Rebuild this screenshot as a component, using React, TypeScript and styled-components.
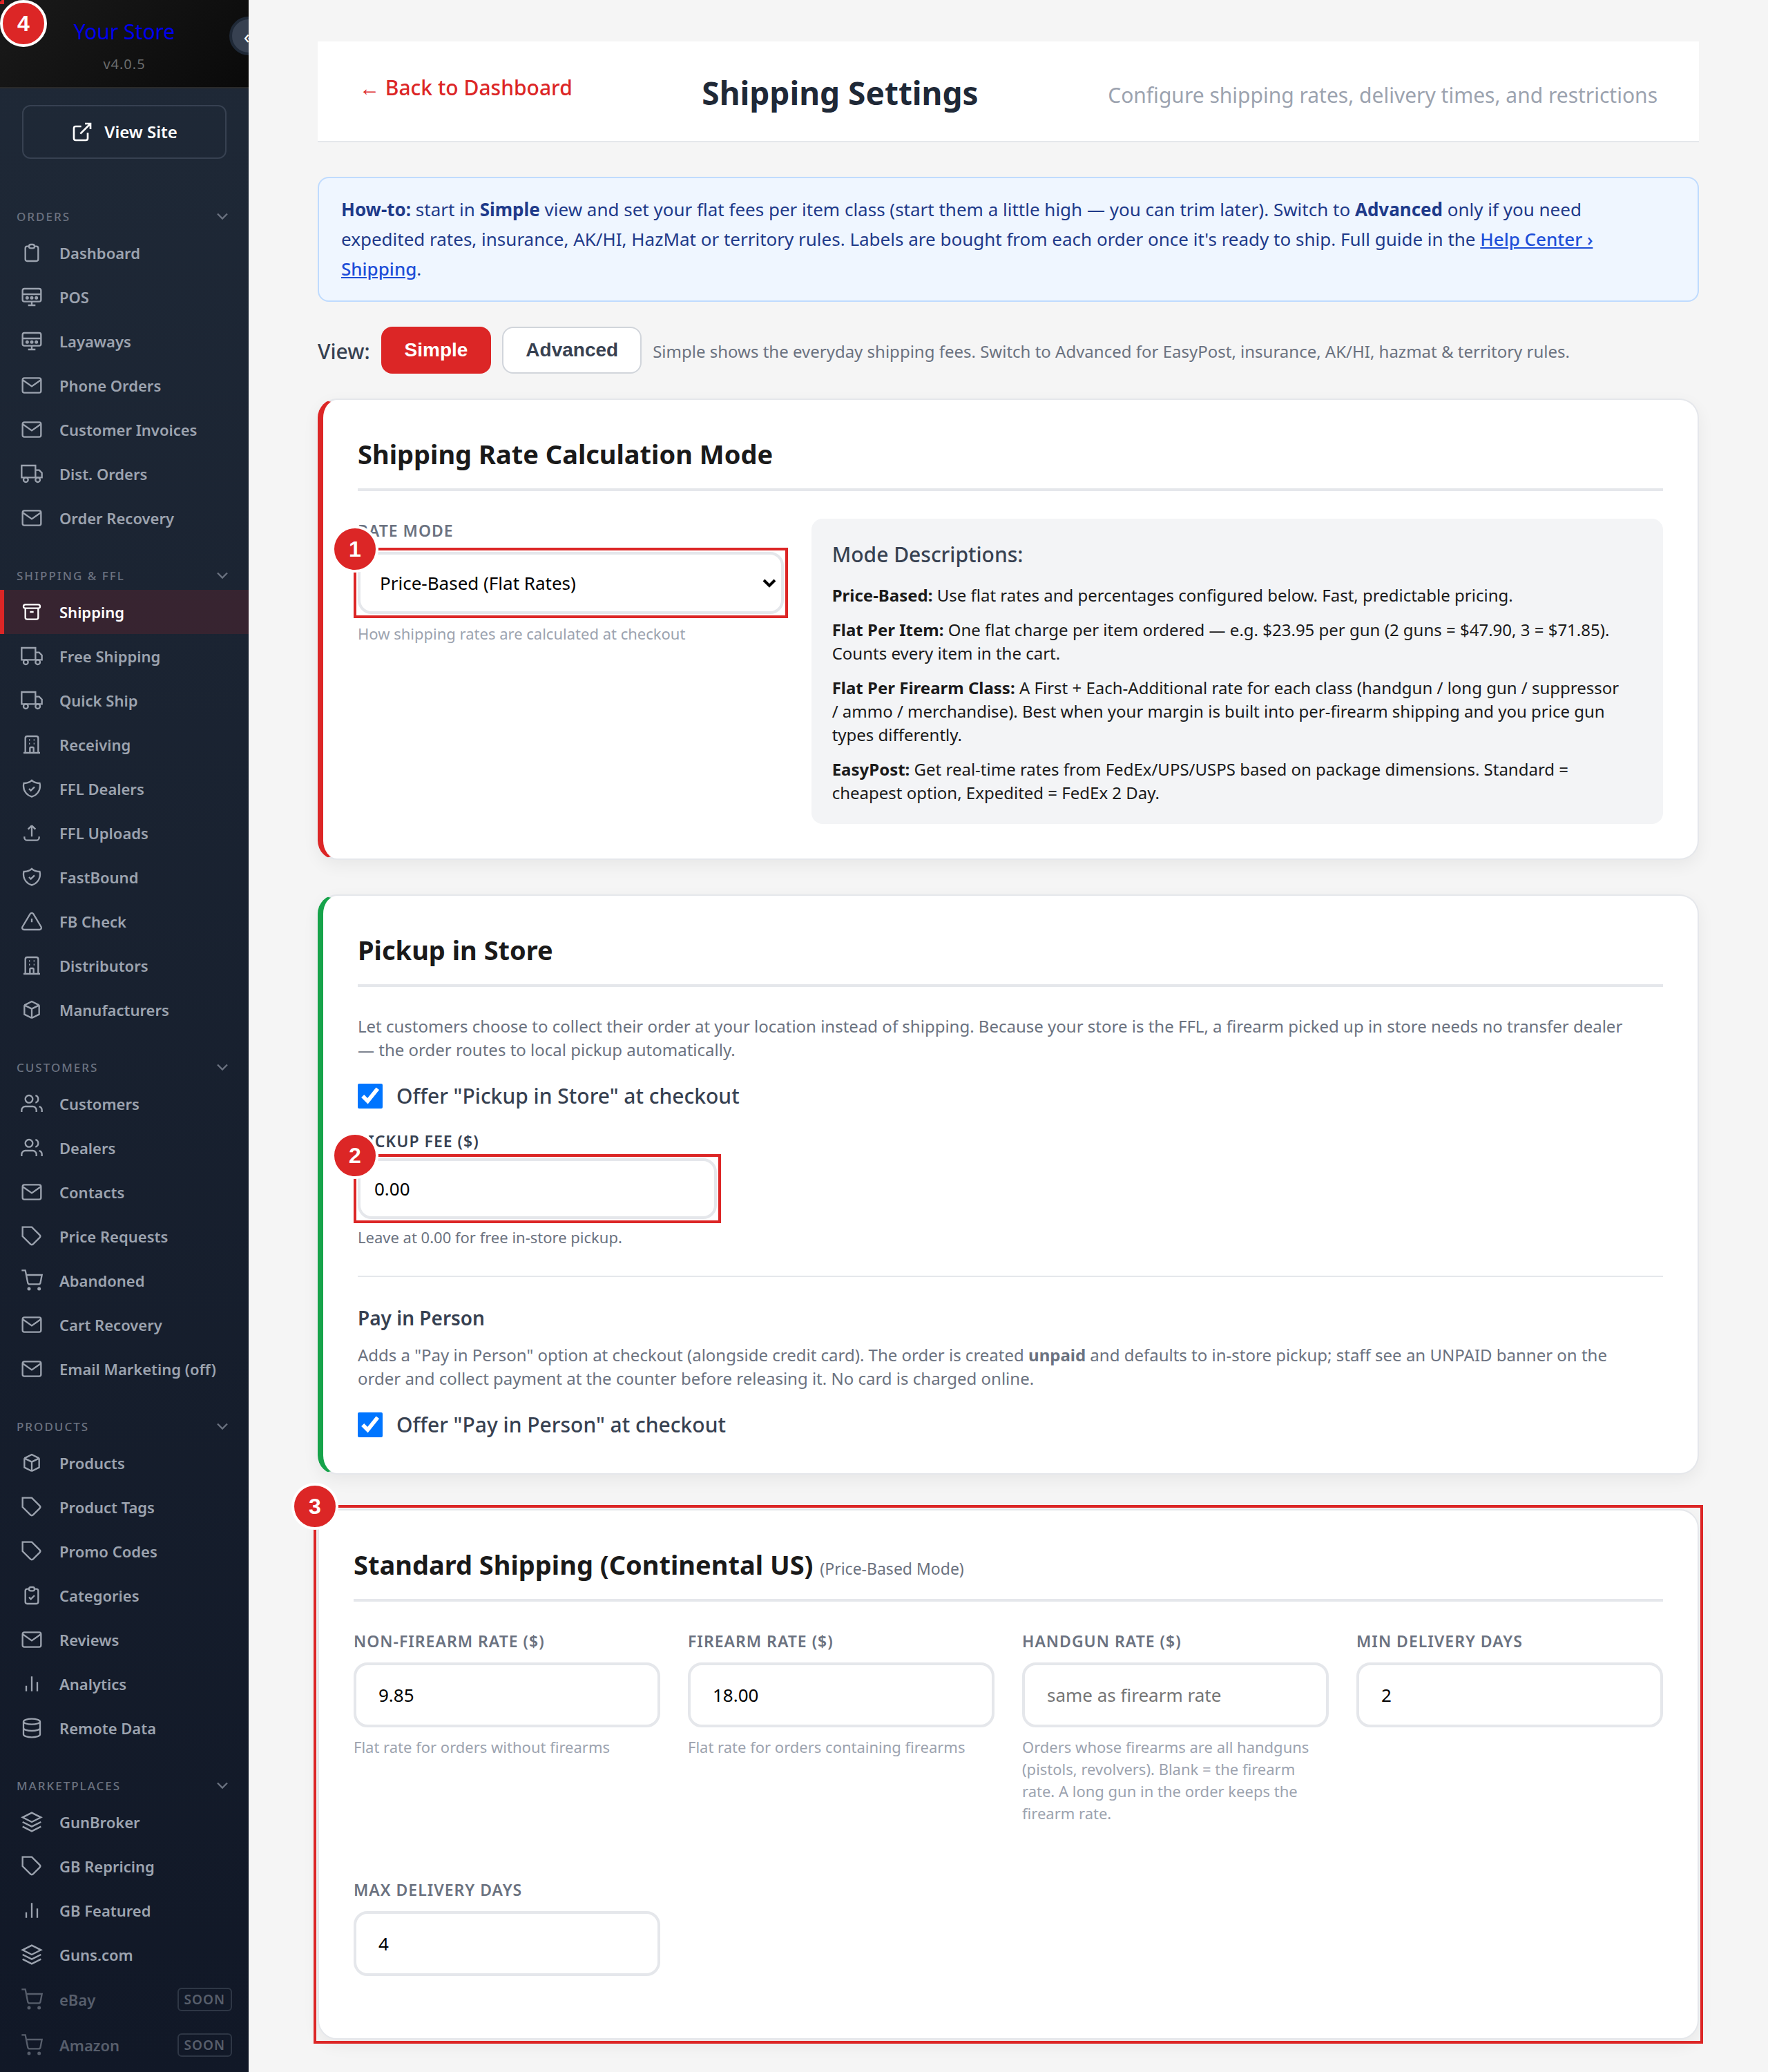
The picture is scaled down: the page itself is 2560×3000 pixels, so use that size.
import React from 'react';
import styled, { createGlobalStyle, css } from 'styled-components';

const GlobalStyle = createGlobalStyle`
  *, *::before, *::after { box-sizing: border-box; }
  body {
    margin: 0;
    background: #f5f5f5;
    color: #1a1a1a;
    font-family: "Noto Sans", "Open Sans", sans-serif;
    font-size: 24px;
    line-height: 34px;
  }
  h1, h2, h3, p, ul { margin: 0; padding: 0; }
  ul { list-style: none; }
  button, input, select { font-family: inherit; }
`;

/* ---------- Icons ---------- */

const Svg = styled.svg<{ $size: number }>`
  display: block;
  flex: none;
  width: ${(p) => p.$size}px;
  height: ${(p) => p.$size}px;
  fill: none;
  stroke: currentColor;
`;

const shapes = {
  clipboard: (
    <path d="M9 5H7a2 2 0 00-2 2v12a2 2 0 002 2h10a2 2 0 002-2V7a2 2 0 00-2-2h-2M9 5a2 2 0 002 2h2a2 2 0 002-2M9 5a2 2 0 012-2h2a2 2 0 012 2" />
  ),
  clipboardCheck: (
    <path d="M9 5H7a2 2 0 00-2 2v12a2 2 0 002 2h10a2 2 0 002-2V7a2 2 0 00-2-2h-2M9 5a2 2 0 002 2h2a2 2 0 002-2M9 5a2 2 0 012-2h2a2 2 0 012 2m-6 9l2 2 4-4" />
  ),
  register: (
    <>
      <rect x="2" y="3" width="20" height="14" rx="2" />
      <path d="M2 9h20M12 17v4M8 21h8" />
      <circle cx="7" cy="13" r="1" />
      <circle cx="12" cy="13" r="1" />
      <circle cx="17" cy="13" r="1" />
    </>
  ),
  mail: (
    <>
      <rect x="2" y="4" width="20" height="16" rx="2" />
      <path d="M22 6l-10 7L2 6" />
    </>
  ),
  truck: (
    <>
      <path d="M1 3h15v13H1zM16 8h4l3 3v5h-7z" />
      <circle cx="5.5" cy="18.5" r="2.5" />
      <circle cx="18.5" cy="18.5" r="2.5" />
    </>
  ),
  archive: (
    <path d="M5 8h14M5 8a2 2 0 110-4h14a2 2 0 110 4M5 8v10a2 2 0 002 2h10a2 2 0 002-2V8m-9 4h4" />
  ),
  building: (
    <path d="M19 21V5a2 2 0 00-2-2H7a2 2 0 00-2 2v16m14 0h2m-2 0h-5m-9 0H3m2 0h5M9 7h1m-1 4h1m4-4h1m-1 4h1m-5 10v-5a1 1 0 011-1h2a1 1 0 011 1v5m-4 0h4" />
  ),
  shield: (
    <path d="M9 12l2 2 4-4m5.618-4.016A11.955 11.955 0 0112 2.944a11.955 11.955 0 01-8.618 3.04A12.02 12.02 0 003 9c0 5.591 3.824 10.29 9 11.622 5.176-1.332 9-6.03 9-11.622 0-1.042-.133-2.052-.382-3.016z" />
  ),
  upload: <path d="M4 16v1a3 3 0 003 3h10a3 3 0 003-3v-1m-4-8l-4-4m0 0L8 8m4-4v12" />,
  alert: (
    <path d="M10.29 3.86L1.82 18a2 2 0 001.71 3h16.94a2 2 0 001.71-3L13.71 3.86a2 2 0 00-3.42 0zM12 9v4" />
  ),
  cube: (
    <path d="M20 7l-8-4-8 4m16 0l-8 4m8-4v10l-8 4m0-10L4 7m8 4v10M4 7v10l8 4" />
  ),
  users: (
    <>
      <path d="M17 21v-2a4 4 0 00-4-4H5a4 4 0 00-4 4v2M23 21v-2a4 4 0 00-3-3.87M16 3.13a4 4 0 010 7.75" />
      <circle cx="9" cy="7" r="4" />
    </>
  ),
  tag: (
    <path d="M20.59 13.41l-7.17 7.17a2 2 0 01-2.83 0L2 12V2h10l8.59 8.59a2 2 0 010 2.82z" />
  ),
  cart: (
    <>
      <circle cx="9" cy="21" r="1" />
      <circle cx="20" cy="21" r="1" />
      <path d="M1 1h4l2.68 13.39a2 2 0 002 1.61h9.72a2 2 0 002-1.61L23 6H6" />
    </>
  ),
  bars: <path d="M18 20V10M12 20V4M6 20v-6" />,
  database: (
    <>
      <ellipse cx="12" cy="5" rx="9" ry="3" />
      <path d="M21 12c0 1.66-4 3-9 3s-9-1.34-9-3M3 5v14c0 1.66 4 3 9 3s9-1.34 9-3V5" />
    </>
  ),
  layers: <path d="M12 2L2 7l10 5 10-5-10-5zM2 17l10 5 10-5M2 12l10 5 10-5" />,
  external: (
    <path d="M18 13v6a2 2 0 01-2 2H5a2 2 0 01-2-2V8a2 2 0 012-2h6M15 3h6v6M10 14L21 3" />
  ),
  chevron: <path d="M6 9l6 6 6-6" />,
};

type IconName = keyof typeof shapes;

function Icon({ name, size = 32, weight = 1.75 }: { name: IconName; size?: number; weight?: number }) {
  return (
    <Svg $size={size} viewBox="0 0 24 24" strokeWidth={weight} aria-hidden="true">
      {shapes[name]}
    </Svg>
  );
}

/* ---------- Callouts ---------- */

const Outline = styled.span`
  position: absolute;
  inset: -6px;
  border: 4px solid #dc2626;
  pointer-events: none;
`;

const Badge = styled.span<{ $corner?: boolean }>`
  position: absolute;
  z-index: 2;
  top: ${(p) => (p.$corner ? 0 : -38)}px;
  left: ${(p) => (p.$corner ? 0 : -38)}px;
  display: flex;
  align-items: center;
  justify-content: center;
  width: 68px;
  height: 68px;
  border: 4px solid #fff;
  border-radius: 50%;
  background: #dc2626;
  color: #fff;
  font: 700 32px/60px "Liberation Sans", Arial, sans-serif;
`;

const CalloutTarget = styled.div`
  position: relative;
`;

const CornerTarget = styled.div`
  position: absolute;
  z-index: 3;
  top: 0;
  left: 0;
`;

function Callout({ n, corner }: { n: number; corner?: boolean }) {
  return (
    <>
      <Outline />
      <Badge $corner={corner}>{n}</Badge>
    </>
  );
}

/* ---------- Shell and sidebar ---------- */

const Shell = styled.div`
  display: grid;
  grid-template-columns: 360px minmax(0, 1fr);
  min-height: 100vh;
`;

const Sidebar = styled.aside`
  position: relative;
  overflow: hidden;
  background: linear-gradient(180deg, #1f2937 0%, #111827 100%);
  color: #9ca3af;
`;

const Brand = styled.header`
  display: flex;
  flex-direction: column;
  align-items: center;
  gap: 12px;
  padding: 24px 32px 20px;
  border-bottom: 2px solid #2a2a2a;
  background: linear-gradient(135deg, #1a1a1a 0%, #0a0a0a 100%);
`;

const StoreLink = styled.a`
  color: #0000ee;
  font-size: 30px;
  line-height: 44px;
  text-decoration: none;
`;

const Version = styled.span`
  color: #6b6b6b;
  font-size: 20px;
  line-height: 26px;
  letter-spacing: 1px;
`;

const CollapseButton = styled.button`
  position: absolute;
  top: 24px;
  right: -28px;
  width: 56px;
  height: 56px;
  padding: 0;
  border: 4px solid #1f2937;
  border-radius: 50%;
  background: #374151;
  color: #fff;
  font-size: 28px;
  line-height: 44px;
`;

const SiteLink = styled.a`
  display: flex;
  align-items: center;
  justify-content: center;
  gap: 16px;
  height: 78px;
  margin: 24px 32px 32px;
  border: 2px solid #374151;
  border-radius: 12px;
  color: #fff;
  font-size: 24px;
  font-weight: 600;
  text-decoration: none;
`;

const NavGroup = styled.section`
  padding-top: 32px;
`;

const GroupToggle = styled.button`
  display: flex;
  align-items: center;
  justify-content: space-between;
  width: 100%;
  height: 40px;
  padding: 0 24px 2px;
  border: 0;
  background: none;
  color: #6b7280;
  font-size: 17px;
  font-weight: 500;
  letter-spacing: 2px;
  text-transform: uppercase;
`;

const NavLink = styled.a<{ $active?: boolean; $soon?: boolean }>`
  display: flex;
  align-items: center;
  gap: 24px;
  height: ${(p) => (p.$soon ? 66 : 64)}px;
  padding: 0 24px;
  border-left: 6px solid transparent;
  color: #9ca3af;
  font-size: 22px;
  font-weight: 600;
  text-decoration: none;
  ${(p) => p.$soon && css`opacity: 0.5;`}
  ${(p) =>
    p.$active &&
    css`
      border-left-color: #dc2626;
      background: rgba(220, 38, 38, 0.15);
      color: #fff;
    `}
`;

const Soon = styled.span`
  margin-left: auto;
  padding: 0 8px;
  border: 2px solid #4b5563;
  border-radius: 6px;
  font-size: 19px;
  line-height: 30px;
  letter-spacing: 1px;
`;

type Item = { label: string; icon: IconName; active?: boolean; soon?: boolean };

const NAV: { title: string; items: Item[] }[] = [
  {
    title: 'Orders',
    items: [
      { label: 'Dashboard', icon: 'clipboard' },
      { label: 'POS', icon: 'register' },
      { label: 'Layaways', icon: 'register' },
      { label: 'Phone Orders', icon: 'mail' },
      { label: 'Customer Invoices', icon: 'mail' },
      { label: 'Dist. Orders', icon: 'truck' },
      { label: 'Order Recovery', icon: 'mail' },
    ],
  },
  {
    title: 'Shipping & FFL',
    items: [
      { label: 'Shipping', icon: 'archive', active: true },
      { label: 'Free Shipping', icon: 'truck' },
      { label: 'Quick Ship', icon: 'truck' },
      { label: 'Receiving', icon: 'building' },
      { label: 'FFL Dealers', icon: 'shield' },
      { label: 'FFL Uploads', icon: 'upload' },
      { label: 'FastBound', icon: 'shield' },
      { label: 'FB Check', icon: 'alert' },
      { label: 'Distributors', icon: 'building' },
      { label: 'Manufacturers', icon: 'cube' },
    ],
  },
  {
    title: 'Customers',
    items: [
      { label: 'Customers', icon: 'users' },
      { label: 'Dealers', icon: 'users' },
      { label: 'Contacts', icon: 'mail' },
      { label: 'Price Requests', icon: 'tag' },
      { label: 'Abandoned', icon: 'cart' },
      { label: 'Cart Recovery', icon: 'mail' },
      { label: 'Email Marketing (off)', icon: 'mail' },
    ],
  },
  {
    title: 'Products',
    items: [
      { label: 'Products', icon: 'cube' },
      { label: 'Product Tags', icon: 'tag' },
      { label: 'Promo Codes', icon: 'tag' },
      { label: 'Categories', icon: 'clipboardCheck' },
      { label: 'Reviews', icon: 'mail' },
      { label: 'Analytics', icon: 'bars' },
      { label: 'Remote Data', icon: 'database' },
    ],
  },
  {
    title: 'Marketplaces',
    items: [
      { label: 'GunBroker', icon: 'layers' },
      { label: 'GB Repricing', icon: 'tag' },
      { label: 'GB Featured', icon: 'bars' },
      { label: 'Guns.com', icon: 'layers' },
      { label: 'eBay', icon: 'cart', soon: true },
      { label: 'Amazon', icon: 'cart', soon: true },
    ],
  },
];

/* ---------- Main column ---------- */

const Main = styled.main`
  padding: 60px 100px 40px;
`;

const PageHeader = styled.header`
  display: flex;
  align-items: center;
  justify-content: space-between;
  padding: 42px 60px 38px;
  border-bottom: 2px solid #e5e7eb;
  background: #fff;
`;

const BackLink = styled.a`
  margin-bottom: 14px;
  color: #dc2626;
  font-size: 30px;
  font-weight: 500;
  text-decoration: none;
`;

const PageTitle = styled.h1`
  color: #1f2937;
  font-size: 46px;
  line-height: 64px;
  font-weight: 700;
`;

const PageSubtitle = styled.p`
  margin-top: 8px;
  color: #9ca3af;
  font-size: 30px;
`;

const HowTo = styled.p`
  margin-top: 50px;
  padding: 24px 110px 24px 32px;
  border: 2px solid #bfdbfe;
  border-radius: 16px;
  background: #eff6ff;
  color: #1e3a8a;
  font-size: 26px;
  line-height: 43px;

  a {
    color: #1d4ed8;
    font-weight: 500;
  }
`;

const ViewBar = styled.div`
  display: flex;
  align-items: center;
  gap: 16px;
  margin: 36px 0;
`;

const ViewLabel = styled.span`
  padding-top: 4px;
  color: #374151;
  font-size: 30px;
  font-weight: 500;
`;

const ViewButton = styled.button<{ $on?: boolean }>`
  height: 68px;
  padding: 0 32px;
  border: 2px solid ${(p) => (p.$on ? '#dc2626' : '#d1d5db')};
  border-radius: 16px;
  background: ${(p) => (p.$on ? '#dc2626' : '#fff')};
  color: ${(p) => (p.$on ? '#fff' : '#374151')};
  font: 700 28px "Liberation Sans", Arial, sans-serif;
`;

const ViewHint = styled.span`
  padding-top: 4px;
  color: #6b7280;
`;

const Cards = styled.div`
  display: grid;
  gap: 50px;
`;

const Card = styled.section<{ $accent?: string }>`
  padding: 50px;
  border: 2px solid #e5e7eb;
  border-radius: 28px;
  background: #fff;
  box-shadow: 0 8px 24px rgba(0, 0, 0, 0.06);
  ${(p) => p.$accent && css`border-left: 8px solid ${p.$accent};`}
`;

const CardTitle = styled.h2`
  margin-bottom: 40px;
  padding-bottom: 22px;
  border-bottom: 4px solid #e5e7eb;
  font-size: 38px;
  line-height: 56px;
  font-weight: 700;
`;

const TitleNote = styled.small`
  color: #6b7280;
  font-size: 23px;
  line-height: 1;
  font-weight: 400;
`;

const ModeGrid = styled.div`
  display: grid;
  grid-template-columns: 1fr 2fr;
  gap: 40px;
`;

const RateGrid = styled.div`
  display: grid;
  grid-template-columns: repeat(4, 1fr);
  gap: 38px 40px;
`;

const Field = styled.div<{ $spaced?: boolean }>`
  margin-bottom: ${(p) => (p.$spaced ? 40 : 0)}px;
`;

const FieldLabel = styled.label<{ $compact?: boolean }>`
  display: block;
  margin-bottom: ${(p) => (p.$compact ? 10 : 14)}px;
  color: ${(p) => (p.$compact ? '#374151' : '#6b7280')};
  font-size: 23px;
  line-height: ${(p) => (p.$compact ? 30 : 34)}px;
  font-weight: 600;
  letter-spacing: 1px;
  text-transform: uppercase;
`;

const control = css`
  display: block;
  width: 100%;
  border: 4px solid #e5e7eb;
  border-radius: 20px;
  background: #fff;
  color: #000;
  font-size: 26px;
`;

const TextInput = styled.input<{ $compact?: boolean }>`
  ${control}
  height: ${(p) => (p.$compact ? 88 : 94)}px;
  padding: 0 ${(p) => (p.$compact ? 20 : 32)}px;

  &::placeholder {
    color: #757575;
    opacity: 1;
  }
`;

const Select = styled.select`
  ${control}
  height: 90px;
  padding: 0 60px 0 28px;
  appearance: none;
`;

const SelectArrow = styled.svg`
  position: absolute;
  top: 38px;
  right: 10px;
  width: 22px;
  height: 16px;
  fill: none;
  stroke: #000;
  stroke-width: 4;
  pointer-events: none;
`;

const Hint = styled.p<{ $dark?: boolean }>`
  margin-top: ${(p) => (p.$dark ? 10 : 12)}px;
  color: ${(p) => (p.$dark ? '#6b7280' : '#9ca3af')};
  font-size: 22px;
  line-height: 32px;
`;

const ModeNotes = styled.div`
  padding: 30px 54px 28px 30px;
  border-radius: 16px;
  background: #f3f4f6;

  p + p {
    margin-top: 16px;
  }
`;

const ModeHeading = styled.h3`
  margin-bottom: 20px;
  color: #374151;
  font-size: 30px;
  line-height: 44px;
  font-weight: 500;
`;

const Copy = styled.p`
  padding-right: 40px;
  color: #6b7280;
`;

const CheckRow = styled.label`
  display: flex;
  align-items: center;
  gap: 20px;
  height: 40px;
  margin: 30px 0;
  color: #374151;
  font-size: 30px;
  font-weight: 500;

  &:last-child {
    margin-bottom: 0;
  }
`;

const CheckBox = styled.input`
  width: 36px;
  height: 36px;
  margin: 0;
  accent-color: #0075ff;
`;

const FeeTarget = styled(CalloutTarget)`
  max-width: 520px;
`;

const Divider = styled.hr`
  height: 2px;
  margin: 40px 0;
  border: 0;
  background: #e5e7eb;
`;

const SubHeading = styled.h3`
  margin-bottom: 18px;
  color: #374151;
  font-size: 28px;
  line-height: 38px;
  font-weight: 600;
`;

type Rate = { id: string; label: string; value?: string; placeholder?: string; hint?: string };

const RATES: Rate[] = [
  { id: 'non-firearm', label: 'Non-Firearm Rate ($)', value: '9.85', hint: 'Flat rate for orders without firearms' },
  { id: 'firearm', label: 'Firearm Rate ($)', value: '18.00', hint: 'Flat rate for orders containing firearms' },
  {
    id: 'handgun',
    label: 'Handgun Rate ($)',
    placeholder: 'same as firearm rate',
    hint: 'Orders whose firearms are all handguns (pistols, revolvers). Blank = the firearm rate. A long gun in the order keeps the firearm rate.',
  },
  { id: 'min-days', label: 'Min Delivery Days', value: '2' },
  { id: 'max-days', label: 'Max Delivery Days', value: '4' },
];

export default function App() {
  return (
    <Shell>
      <GlobalStyle />
      <Sidebar>
        <CornerTarget>
          <Callout n={4} corner />
        </CornerTarget>
        <Brand>
          <StoreLink href="#store">Your Store</StoreLink>
          <Version>v4.0.5</Version>
        </Brand>
        <CollapseButton type="button" aria-label="Collapse sidebar">«</CollapseButton>
        <SiteLink href="#site">
          <Icon name="external" weight={2} />
          View Site
        </SiteLink>
        <nav>
          {NAV.map((group) => (
            <NavGroup key={group.title}>
              <GroupToggle type="button">
                {group.title}
                <Icon name="chevron" size={28} weight={2} />
              </GroupToggle>
              <ul>
                {group.items.map((item) => (
                  <li key={item.label}>
                    <NavLink href="#nav" $active={item.active} $soon={item.soon}>
                      <Icon name={item.icon} />
                      {item.label}
                      {item.soon && <Soon>SOON</Soon>}
                    </NavLink>
                  </li>
                ))}
              </ul>
            </NavGroup>
          ))}
        </nav>
      </Sidebar>

      <Main>
        <PageHeader>
          <BackLink href="#dashboard">← Back to Dashboard</BackLink>
          <PageTitle>Shipping Settings</PageTitle>
          <PageSubtitle>Configure shipping rates, delivery times, and restrictions</PageSubtitle>
        </PageHeader>

        <HowTo>
          <strong>How-to:</strong> start in <strong>Simple</strong> view and set your flat fees per item class (start
          them a little high — you can trim later). Switch to <strong>Advanced</strong> only if you need expedited
          rates, insurance, AK/HI, HazMat or territory rules. Labels are bought from each order once it's ready to
          ship. Full guide in the <a href="#help">Help Center › Shipping</a>.
        </HowTo>

        <ViewBar>
          <ViewLabel>View:</ViewLabel>
          <ViewButton type="button" $on>Simple</ViewButton>
          <ViewButton type="button">Advanced</ViewButton>
          <ViewHint>
            Simple shows the everyday shipping fees. Switch to Advanced for EasyPost, insurance, AK/HI, hazmat &amp;
            territory rules.
          </ViewHint>
        </ViewBar>

        <Cards>
          <Card $accent="#dc2626">
            <CardTitle>Shipping Rate Calculation Mode</CardTitle>
            <ModeGrid>
              <Field>
                <FieldLabel htmlFor="rate-mode">Rate Mode</FieldLabel>
                <CalloutTarget>
                  <Select id="rate-mode" defaultValue="price">
                    <option value="price">Price-Based (Flat Rates)</option>
                    <option value="item">Flat Per Item</option>
                    <option value="class">Flat Per Firearm Class</option>
                    <option value="easypost">EasyPost</option>
                  </Select>
                  <SelectArrow viewBox="0 0 22 16" aria-hidden="true">
                    <path d="M3 3l8 8 8-8" />
                  </SelectArrow>
                  <Callout n={1} />
                </CalloutTarget>
                <Hint>How shipping rates are calculated at checkout</Hint>
              </Field>
              <ModeNotes>
                <ModeHeading>Mode Descriptions:</ModeHeading>
                <p>
                  <strong>Price-Based:</strong> Use flat rates and percentages configured below. Fast, predictable
                  pricing.
                </p>
                <p>
                  <strong>Flat Per Item:</strong> One flat charge per item ordered — e.g. $23.95 per gun (2 guns =
                  $47.90, 3 = $71.85). Counts every item in the cart.
                </p>
                <p>
                  <strong>Flat Per Firearm Class:</strong> A First + Each-Additional rate for each class (handgun /
                  long gun / suppressor / ammo / merchandise). Best when your margin is built into per-firearm
                  shipping and you price gun types differently.
                </p>
                <p>
                  <strong>EasyPost:</strong> Get real-time rates from FedEx/UPS/USPS based on package dimensions.
                  Standard = cheapest option, Expedited = FedEx 2 Day.
                </p>
              </ModeNotes>
            </ModeGrid>
          </Card>

          <Card $accent="#16a34a">
            <CardTitle>Pickup in Store</CardTitle>
            <Copy>
              Let customers choose to collect their order at your location instead of shipping. Because your store is
              the FFL, a firearm picked up in store needs no transfer dealer — the order routes to local pickup
              automatically.
            </Copy>
            <CheckRow>
              <CheckBox type="checkbox" defaultChecked />
              Offer "Pickup in Store" at checkout
            </CheckRow>
            <FieldLabel htmlFor="pickup-fee" $compact>Pickup Fee ($)</FieldLabel>
            <FeeTarget>
              <TextInput id="pickup-fee" defaultValue="0.00" $compact />
              <Callout n={2} />
            </FeeTarget>
            <Hint $dark>Leave at 0.00 for free in-store pickup.</Hint>
            <Divider />
            <SubHeading>Pay in Person</SubHeading>
            <Copy>
              Adds a "Pay in Person" option at checkout (alongside credit card). The order is created{' '}
              <strong>unpaid</strong> and defaults to in-store pickup; staff see an UNPAID banner on the order and
              collect payment at the counter before releasing it. No card is charged online.
            </Copy>
            <CheckRow>
              <CheckBox type="checkbox" defaultChecked />
              Offer "Pay in Person" at checkout
            </CheckRow>
          </Card>

          <CalloutTarget>
            <Card>
              <CardTitle>
                Standard Shipping (Continental US) <TitleNote>(Price-Based Mode)</TitleNote>
              </CardTitle>
              <RateGrid>
                {RATES.map((rate) => (
                  <Field key={rate.id} $spaced>
                    <FieldLabel htmlFor={rate.id}>{rate.label}</FieldLabel>
                    <TextInput id={rate.id} defaultValue={rate.value} placeholder={rate.placeholder} />
                    {rate.hint && <Hint>{rate.hint}</Hint>}
                  </Field>
                ))}
              </RateGrid>
            </Card>
            <Callout n={3} />
          </CalloutTarget>
        </Cards>
      </Main>
    </Shell>
  );
}
